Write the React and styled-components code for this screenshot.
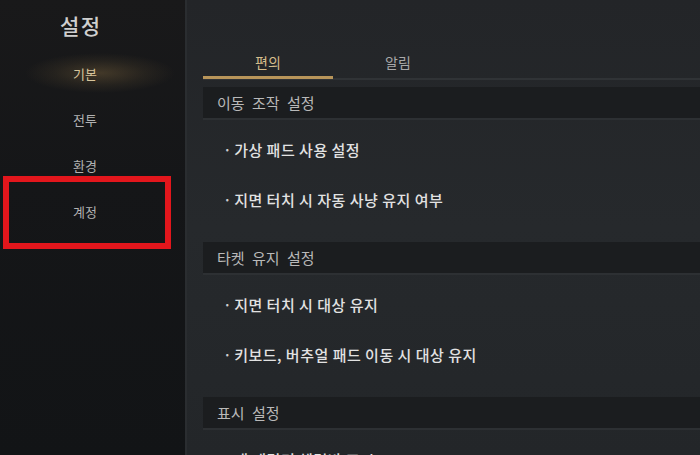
import React from "react";
import styled, { createGlobalStyle } from "styled-components";

const Global = createGlobalStyle`
  html, body { margin: 0; padding: 0; background: #141618; }
  body { font-family: "Noto Sans CJK KR", "Noto Sans", sans-serif; }
  * { box-sizing: border-box; }
`;

const Screen = styled.div`
  position: relative;
  width: 700px;
  height: 455px;
  overflow: hidden;
  display: flex;
  background: #141618;
`;

const Sidebar = styled.aside`
  width: 187px;
  flex: none;
  display: flex;
  flex-direction: column;
  background: linear-gradient(180deg, #19191a 0%, #151618 40%, #121416 100%);
  border-right: 2px solid #2a2d30;
`;

const Title = styled.h1`
  margin: 0;
  height: 50px;
  padding: 9px 0 0 60px;
  font-size: 21px;
  font-weight: 500;
  color: #cfcfcf;
  letter-spacing: 1.5px;
  line-height: 32px;
`;

const MenuItem = styled.div`
  height: 46px;
  display: flex;
  align-items: center;
  padding-left: 73px;
  font-size: 13px;
  color: ${(p) => (p.$active ? "#d8c59c" : "#b2b2b2")};
  background: ${(p) =>
    p.$active
      ? "radial-gradient(ellipse 75px 20px at 100px 50%, rgba(150,120,70,0.34), rgba(110,90,55,0.16) 60%, rgba(0,0,0,0) 100%)"
      : "none"};
`;

const Content = styled.main`
  flex: 1;
  display: flex;
  flex-direction: column;
  padding: 52px 0 0 16px;
  background: linear-gradient(180deg, #232528 0%, #26292c 50%, #232629 100%);
`;

const Tabs = styled.div`
  display: flex;
  height: 36px;
  border-bottom: 2px solid #303336;
`;

const Tab = styled.div`
  width: 130px;
  display: flex;
  align-items: center;
  justify-content: center;
  padding-bottom: 4px;
  font-size: 14px;
  color: ${(p) => (p.$active ? "#d6bd8c" : "#a9a9a9")};
  border-bottom: 3px solid ${(p) => (p.$active ? "#b8955a" : "transparent")};
  margin-bottom: -1px;
`;

const List = styled.div`
  display: flex;
  flex-direction: column;
  padding-top: 7px;
`;

const SectionHeader = styled.div`
  height: 33px;
  display: flex;
  align-items: center;
  padding-left: 14px;
  background: #1b1d1f;
  border-bottom: 2px solid #2d3033;
  font-size: 15px;
  word-spacing: 4px;
  color: #b9b9b9;
`;

const Items = styled.div`
  display: flex;
  flex-direction: column;
  padding: 4px 0 18px;
`;

const Item = styled.div`
  height: 50px;
  display: flex;
  align-items: center;
  padding-left: 20px;
  font-size: 15px;
  letter-spacing: 0.5px;
  font-weight: 500;
  color: #e2e2e2;
  &::before {
    content: "·";
    margin-right: 2px;
    color: #cfcfcf;
  }
`;

const Highlight = styled.div`
  position: absolute;
  left: 3px;
  top: 176px;
  width: 168px;
  height: 73px;
  border: 6px solid #e3161c;
  pointer-events: none;
`;

const menu = ["기본", "전투", "환경", "계정"];

const sections = [
  { title: "이동 조작 설정", items: ["가상 패드 사용 설정", "지면 터치 시 자동 사냥 유지 여부"] },
  { title: "타켓 유지 설정", items: ["지면 터치 시 대상 유지", "키보드, 버추얼 패드 이동 시 대상 유지"] },
  { title: "표시 설정", items: ["내 캐릭터 체력바 표시"] },
];

export default function App() {
  return (
    <>
      <Global />
      <Screen>
        <Sidebar>
          <Title>설정</Title>
          {menu.map((m, i) => (
            <MenuItem key={m} $active={i === 0}>
              {m}
            </MenuItem>
          ))}
        </Sidebar>
        <Content>
          <Tabs>
            <Tab $active>편의</Tab>
            <Tab>알림</Tab>
          </Tabs>
          <List>
            {sections.map((s) => (
              <React.Fragment key={s.title}>
                <SectionHeader>{s.title}</SectionHeader>
                <Items>
                  {s.items.map((it) => (
                    <Item key={it}>{it}</Item>
                  ))}
                </Items>
              </React.Fragment>
            ))}
          </List>
        </Content>
        <Highlight />
      </Screen>
    </>
  );
}
